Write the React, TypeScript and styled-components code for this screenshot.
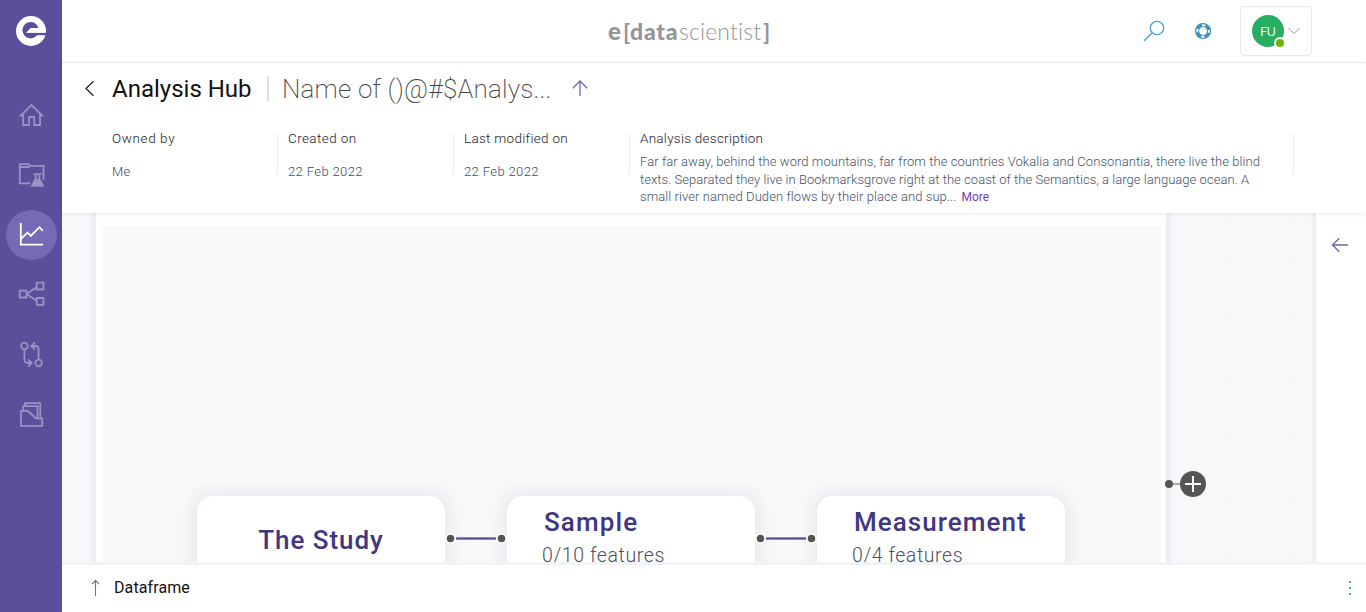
import React from "react";
import styled, { createGlobalStyle } from "styled-components";

const GlobalStyle = createGlobalStyle`
  * { box-sizing: border-box; }
  body { margin: 0; background: #fff; font-family: Roboto, "Open Sans", sans-serif; overflow: hidden; }
  p { margin: 0; }
`;

const Shell = styled.div`
  display: flex;
  width: 100vw;
  height: 612px;
`;

const Sidebar = styled.nav`
  flex: none;
  width: 62px;
  padding: 15px 0 0 6px;
  background: #594f9b;
`;

const Brand = styled.div`
  width: 50px;
  height: 75px;
  padding-left: 9px;
`;

const NavList = styled.div`
  display: flex;
  flex-direction: column;
  gap: 10px;
`;

const NavItem = styled.div<{ $active?: boolean }>`
  width: 51px;
  height: 50px;
  border-radius: 50%;
  background: ${(p) => (p.$active ? "#766ab7" : "transparent")};
  color: ${(p) => (p.$active ? "#fff" : "#9a92c4")};
`;

const NavIcon = styled.svg`
  display: block;
  width: 50px;
  height: 50px;
  fill: none;
  stroke: currentColor;
  stroke-width: 1.8;
`;

const Main = styled.div`
  flex: 1;
  min-width: 0;
  display: flex;
  flex-direction: column;
`;

const TopBar = styled.header`
  flex: none;
  height: 63px;
  display: grid;
  grid-template-columns: 1fr 160px 1fr;
  border-bottom: 1px solid #ededed;
  padding-right: 54px;
  padding-left: 2px;
`;

const Wordmark = styled.div`
  grid-column: 2;
  display: flex;
  align-items: center;
  height: 62px;
  color: #939598;
  font-family: Lato, sans-serif;
  font-size: 23px;
  line-height: 30px;
`;

const WordPart = styled.span<{ $weight: number; $width: number; $spacing?: number; $size?: number }>`
  flex: none;
  width: ${(p) => p.$width}px;
  font-size: ${(p) => p.$size ?? 23}px;
  font-weight: ${(p) => p.$weight};
  letter-spacing: ${(p) => p.$spacing ?? 0}px;
  white-space: nowrap;
`;

const Tools = styled.div`
  display: flex;
  justify-content: flex-end;
  align-items: center;
  height: 62px;
`;

const SearchIcon = styled.svg`
  width: 22px;
  height: 22px;
  margin-right: 29px;
`;

const HelpIcon = styled.svg`
  width: 18px;
  height: 18px;
  margin-right: 28px;
`;

const UserBox = styled.div`
  display: flex;
  align-items: center;
  width: 72px;
  height: 50px;
  padding-left: 11px;
  border: 1px solid #e9e9e9;
  border-radius: 4px;
`;

const Avatar = styled.div`
  position: relative;
  width: 32px;
  height: 32px;
  border-radius: 50%;
  background: #27ae60;
  color: #fff;
  font: 400 13px/32px "Open Sans", sans-serif;
  text-align: center;
`;

const Presence = styled.span`
  position: absolute;
  right: -2px;
  bottom: -2px;
  width: 12px;
  height: 12px;
  border: 2px solid #fff;
  border-radius: 50%;
  background: #6bb700;
`;

const Chevron = styled.svg`
  width: 14px;
  height: 8px;
  margin-left: 3px;
`;

const Summary = styled.section`
  flex: none;
  position: relative;
  z-index: 1;
  height: 150px;
  background: #fff;
  box-shadow: 0 1px 5px rgba(0, 0, 0, 0.08);
`;

const TitleRow = styled.div`
  display: flex;
  align-items: center;
  height: 51px;
  padding-left: 21px;
`;

const BackIcon = styled.svg`
  width: 14px;
  height: 18px;
  margin-right: 15px;
`;

const Title = styled.h1`
  width: 155px;
  margin: 0;
  color: #111;
  font-size: 24px;
  font-weight: 400;
  line-height: 30px;
  letter-spacing: 0;
  white-space: nowrap;
`;

const TitleRule = styled.span`
  width: 2px;
  height: 25px;
  background: #dde1e6;
`;

const AnalysisName = styled.h2`
  width: 302px;
  margin: 0;
  padding-left: 13px;
  color: #444;
  font-size: 26px;
  font-weight: 200;
  line-height: 30px;
  letter-spacing: 0.2px;
  white-space: nowrap;
`;

const UpIcon = styled.svg`
  width: 18px;
  height: 18px;
`;

const Meta = styled.div`
  display: flex;
  padding: 12px 0 0 50px;
`;

const MetaCell = styled.div<{ $width: number }>`
  position: relative;
  width: ${(p) => p.$width}px;
  &::after {
    content: "";
    position: absolute;
    right: 10px;
    top: 7px;
    width: 1px;
    height: 40px;
    background: #ebebeb;
  }
`;

const MetaLabel = styled.p<{ $spacing: number }>`
  padding-top: 2px;
  color: #1c212c;
  font-size: 13.5px;
  line-height: 20px;
  font-weight: 300;
  letter-spacing: ${(p) => p.$spacing}px;
`;

const MetaValue = styled.p<{ $spacing: number }>`
  margin-top: 14px;
  color: #3e4866;
  font-size: 13px;
  line-height: 20px;
  letter-spacing: ${(p) => p.$spacing}px;
  font-weight: 300;
`;

const Description = styled.div`
  margin-top: 5px;
  color: #435068;
  font-size: 13px;
  line-height: 17.6px;
  font-weight: 300;
`;

const DescriptionLine = styled.p<{ $spacing: number }>`
  letter-spacing: ${(p) => p.$spacing}px;
  white-space: nowrap;
`;

const More = styled.a`
  margin-left: 5px;
  color: #6f3fb0;
  font-size: 12px;
  font-weight: 400;
  letter-spacing: 0;
`;

const Workspace = styled.div`
  flex: 1;
  min-height: 0;
  display: flex;
`;

const Canvas = styled.div`
  flex: none;
  display: flex;
  width: 1254px;
  padding-left: 29px;
  overflow: hidden;
  background:
    linear-gradient(to left, rgba(40, 50, 70, 0.07), transparent 5px),
    repeating-linear-gradient(to bottom, transparent 0 46px, #f5f5f6 46px 47px, transparent 47px 60px),
    repeating-linear-gradient(to right, transparent 0 28px, #f5f5f6 28px 29px, transparent 29px 60px),
    #f8f8fb;
`;

const Frame = styled.div`
  flex: none;
  width: 1080px;
  padding: 13px 5px 0;
  border: solid #ebf0f4;
  border-width: 0 5px;
  background: #fff;
`;

const Board = styled.div`
  display: flex;
  height: 400px;
  padding: 270px 0 0 96px;
  background: #f9f9f9;
`;

const Node = styled.div<{ $single?: boolean }>`
  width: 248px;
  height: 120px;
  padding: ${(p) => (p.$single ? "26px 0 0" : "8px 0 0 37px")};
  border-radius: 16px;
  background: #fff;
  box-shadow: 0 0 18px 5px rgba(205, 213, 226, 0.42);
  text-align: ${(p) => (p.$single ? "center" : "left")};
`;

const NodeTitle = styled.p<{ $spacing: number }>`
  color: #3f3783;
  font-size: 26px;
  font-weight: 500;
  line-height: 36px;
  letter-spacing: ${(p) => p.$spacing}px;
`;

const NodeCount = styled.p<{ $spacing: number }>`
  margin: 2px 0 0 -2px;
  color: #475263;
  font-size: 19.5px;
  line-height: 28px;
  font-weight: 300;
  letter-spacing: ${(p) => p.$spacing}px;
`;

const Link = styled.svg`
  position: relative;
  z-index: 1;
  flex: none;
  width: 62px;
  height: 12px;
  margin-top: 36px;
`;

const AddStep = styled.svg`
  position: relative;
  flex: none;
  width: 44px;
  height: 28px;
  margin: 257px 0 0 -6px;
`;

const SidePanel = styled.aside`
  flex: 1;
  padding: 24px 0 0 15px;
  background: #fff;
`;

const Footer = styled.footer`
  flex: none;
  display: flex;
  align-items: center;
  height: 50px;
  padding: 0 13px 2px 28px;
  border-top: 3px solid #f1f3f5;
  background: #fff;
`;

const FooterLabel = styled.span`
  flex: 1;
  margin-left: 13px;
  color: #111;
  font-size: 16px;
  letter-spacing: 0.1px;
`;

const FooterArrow = styled.svg`
  width: 11px;
  height: 18px;
`;

const Dots = styled.svg`
  width: 6px;
  height: 16px;
`;

function Connector() {
  return (
    <Link viewBox="0 0 62 12">
      <rect x="11" y="5" width="40" height="3" fill="#a79fd2" />
      <rect x="11" y="5.7" width="40" height="1.6" fill="#594f9b" />
      {[5.5, 56.5].map((x) => (
        <circle key={x} cx={x} cy="6.5" r="4.6" fill="#555" stroke="#fff" strokeWidth="1.6" />
      ))}
    </Link>
  );
}

function EMark() {
  return (
    <svg width="32" height="32" viewBox="0 0 32 32">
      <circle cx="16" cy="16" r="15" fill="#fff" />
      <circle cx="15.6" cy="15.2" r="8.2" fill="#594f9b" />
      <path d="M11 18 15.5 13H27V18Z" fill="#fff" />
      <path d="M11 17.9H31V20.2H11Z" fill="#594f9b" />
    </svg>
  );
}

export default function App() {
  return (
    <>
      <GlobalStyle />
      <Shell>
        <Sidebar>
          <Brand>
            <EMark />
          </Brand>
          <NavList>
            <NavItem>
              <NavIcon viewBox="0 0 50 50">
                <path d="M17.2 25.5H14.8L25.5 15 36.2 25.5H34V35H28.2V27H23V35H17.2Z" />
              </NavIcon>
            </NavItem>
            <NavItem>
              <NavIcon viewBox="0 0 50 50">
                <path d="M24.5 33.3H13.8V14.2H22.5L24 15.8H37.5V30M13.8 17H22.5L24 15.8" />
                <path d="M27.5 23.2H35.5V25H34.2V28.5L38 35.8V36.8H25V35.8L28.8 28.5V25H27.5Z" fill="currentColor" stroke="none" />
                <path d="M31.5 25V29" stroke="#594f9b" strokeWidth="2" />
              </NavIcon>
            </NavItem>
            <NavItem $active>
              <NavIcon viewBox="0 0 50 50">
                <path d="M14.8 13V34.7H37M15 28.8 21.5 22.6 24.8 26 33.5 17.2 36.8 20.8" />
              </NavIcon>
            </NavItem>
            <NavItem>
              <NavIcon viewBox="0 0 50 50">
                <path d="M13.7 20.7H20.5V27.5H13.7ZM30.7 12.7H37.5V19.5H30.7ZM30.7 28H37.5V34.8H30.7ZM30.5 17.3 20.7 24 30.5 30.8" />
              </NavIcon>
            </NavItem>
            <NavItem>
              <NavIcon viewBox="0 0 50 50">
                <circle cx="18.4" cy="16" r="3.3" />
                <circle cx="32.6" cy="33" r="3.3" />
                <path d="M18.4 19.3V29.5Q18.4 33 22 33H25.5M22 29.3 25.7 33 22 36.7M32.6 29.7V19.5Q32.6 16 29 16H25.5M29 12.3 25.3 16 29 19.7" />
              </NavIcon>
            </NavItem>
            <NavItem>
              <NavIcon viewBox="0 0 50 50">
                <path d="M15 20.8H21.8L30 28.5H36.2V35.8H15ZM17.2 20.5V16.2H31.5V28.3M19 16V13.2H34.3V28.3" />
              </NavIcon>
            </NavItem>
          </NavList>
        </Sidebar>

        <Main>
          <TopBar>
            <Wordmark>
              <WordPart $weight={900} $width={15} $size={24}>e</WordPart>
              <WordPart $weight={700} $width={7}>[</WordPart>
              <WordPart $weight={900} $width={49} $spacing={0.8}>data</WordPart>
              <WordPart $weight={300} $width={84} $spacing={0.15}>scientist</WordPart>
              <WordPart $weight={700} $width={7}>]</WordPart>
            </Wordmark>
            <Tools>
              <SearchIcon viewBox="0 0 22 22" fill="none" stroke="#4ba0d0" strokeWidth="1.3">
                <circle cx="14" cy="8" r="6.7" />
                <path d="M9.2 12.8 1 21" />
              </SearchIcon>
              <HelpIcon viewBox="0 0 18 18" fill="none">
                <circle cx="9" cy="9" r="6" stroke="#3f8fbf" strokeWidth="4.2" />
                <circle cx="9" cy="9" r="5.8" stroke="#fff" strokeWidth="1.9" strokeDasharray="3.6 5.51" strokeDashoffset="1.8" />
              </HelpIcon>
              <UserBox>
                <Avatar>
                  FU
                  <Presence />
                </Avatar>
                <Chevron viewBox="0 0 14 8" fill="none" stroke="#999" strokeWidth="1">
                  <path d="M1.5 1 7 6.5 12.5 1" />
                </Chevron>
              </UserBox>
            </Tools>
          </TopBar>

          <Summary>
            <TitleRow>
              <BackIcon viewBox="0 0 14 18" fill="none" stroke="#222" strokeWidth="1.3">
                <path d="M10.5 1.3 3 8.5 10.5 15.7" />
              </BackIcon>
              <Title>Analysis Hub</Title>
              <TitleRule />
              <AnalysisName>Name of ()@#$Analys...</AnalysisName>
              <UpIcon viewBox="0 0 18 18" fill="none" stroke="#7468b8" strokeWidth="1.3">
                <path d="M9 16V1M1.8 8.2 9 1 16.2 8.2" />
              </UpIcon>
            </TitleRow>
            <Meta>
              <MetaCell $width={176}>
                <MetaLabel $spacing={0.6}>Owned by</MetaLabel>
                <MetaValue $spacing={0.2}>Me</MetaValue>
              </MetaCell>
              <MetaCell $width={176}>
                <MetaLabel $spacing={0.4}>Created on</MetaLabel>
                <MetaValue $spacing={0.38}>22 Feb 2022</MetaValue>
              </MetaCell>
              <MetaCell $width={176}>
                <MetaLabel $spacing={0.3}>Last modified on</MetaLabel>
                <MetaValue $spacing={0.38}>22 Feb 2022</MetaValue>
              </MetaCell>
              <MetaCell $width={664}>
                <MetaLabel $spacing={0.25}>Analysis description</MetaLabel>
                <Description>
                  <DescriptionLine $spacing={0.07}>
                    Far far away, behind the word mountains, far from the countries Vokalia and Consonantia, there live the blind
                  </DescriptionLine>
                  <DescriptionLine $spacing={0.04}>
                    texts. Separated they live in Bookmarksgrove right at the coast of the Semantics, a large language ocean. A
                  </DescriptionLine>
                  <DescriptionLine $spacing={0.08}>
                    small river named Duden flows by their place and sup...<More>More</More>
                  </DescriptionLine>
                </Description>
              </MetaCell>
            </Meta>
          </Summary>

          <Workspace>
            <Canvas>
              <Frame>
                <Board>
                  <Node $single>
                    <NodeTitle $spacing={0.95}>The Study</NodeTitle>
                  </Node>
                  <Connector />
                  <Node>
                    <NodeTitle $spacing={1.1}>Sample</NodeTitle>
                    <NodeCount $spacing={0.6}>0/10 features</NodeCount>
                  </Node>
                  <Connector />
                  <Node>
                    <NodeTitle $spacing={1.05}>Measurement</NodeTitle>
                    <NodeCount $spacing={0.57}>0/4 features</NodeCount>
                  </Node>
                </Board>
              </Frame>
              <AddStep viewBox="0 0 44 28">
                <path d="M4 14H16" stroke="#aaa" strokeWidth="2" />
                <circle cx="4" cy="14" r="4" fill="#555" />
                <circle cx="28" cy="14" r="13" fill="#555" />
                <path d="M20 14H36M28 6V22" stroke="#fff" strokeWidth="2" />
              </AddStep>
            </Canvas>
            <SidePanel>
              <svg width="18" height="16" viewBox="0 0 18 16" fill="none" stroke="#6c62ab" strokeWidth="1.3">
                <path d="M17 8H1.5M8.3 1.2 1.5 8 8.3 14.8" />
              </svg>
            </SidePanel>
          </Workspace>

          <Footer>
            <FooterArrow viewBox="0 0 11 18" fill="none" stroke="#7468b8" strokeWidth="1.1">
              <path d="M5.5 17V1.5M2 5 5.5 1.5 9 5" />
            </FooterArrow>
            <FooterLabel>Dataframe</FooterLabel>
            <Dots viewBox="0 0 6 16" fill="#4ba0d0">
              <path d="M2 1H4V3H2ZM2 7H4V9H2ZM2 13H4V15H2Z" />
            </Dots>
          </Footer>
        </Main>
      </Shell>
    </>
  );
}
